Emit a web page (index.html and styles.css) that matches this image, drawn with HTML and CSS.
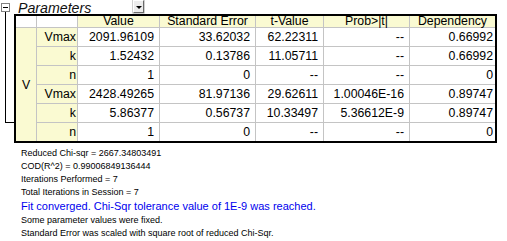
FILE: index.html
```html
<!DOCTYPE html>
<html>
<head>
<meta charset="utf-8">
<link rel="stylesheet" href="styles.css">
</head>
<body>
<div class="sheet">
  <div class="title-row">
    <span class="toggle"><span class="minus"></span></span>
    <span class="title">Parameters</span>
    <span class="drop"><span class="tri"></span></span>
  </div>
  <div class="main-row">
    <div class="connector"></div>
    <div class="grid">
      <div class="c corner"></div>
      <div class="c corner"></div>
      <div class="c hd">Value</div>
      <div class="c hd">Standard Error</div>
      <div class="c hd">t-Value</div>
      <div class="c hd">Prob&gt;|t|</div>
      <div class="c hd">Dependency</div>

      <div class="c group">V</div>

      <div class="c nm">Vmax</div><div class="c v">2091.96109</div><div class="c v">33.62032</div><div class="c v">62.22311</div><div class="c v">--</div><div class="c v last">0.66992</div>
      <div class="c nm">k</div><div class="c v">1.52432</div><div class="c v">0.13786</div><div class="c v">11.05711</div><div class="c v">--</div><div class="c v last">0.66992</div>
      <div class="c nm">n</div><div class="c v">1</div><div class="c v">0</div><div class="c v">--</div><div class="c v">--</div><div class="c v last">0</div>
      <div class="c nm">Vmax</div><div class="c v">2428.49265</div><div class="c v">81.97136</div><div class="c v">29.62611</div><div class="c v">1.00046E-16</div><div class="c v last">0.89747</div>
      <div class="c nm">k</div><div class="c v">5.86377</div><div class="c v">0.56737</div><div class="c v">10.33497</div><div class="c v">5.36612E-9</div><div class="c v last">0.89747</div>
      <div class="c nm">n</div><div class="c v">1</div><div class="c v">0</div><div class="c v">--</div><div class="c v">--</div><div class="c v last">0</div>
    </div>
  </div>
  <div class="notes">
    <div class="note">Reduced Chi-sqr = 2667.34803491</div>
    <div class="note">COD(R^2) = 0.99006849136444</div>
    <div class="note">Iterations Performed = 7</div>
    <div class="note">Total Iterations in Session = 7</div>
    <div class="note big">Fit converged. Chi-Sqr tolerance value of 1E-9 was reached.</div>
    <div class="note">Some parameter values were fixed.</div>
    <div class="note">Standard Error was scaled with square root of reduced Chi-Sqr.</div>
  </div>
</div>
</body>
</html>
```

FILE: styles.css
```css
html, body {
  margin: 0;
  padding: 0;
  background: #fff;
}
body {
  font-family: "Liberation Sans", Arial, sans-serif;
  color: #000;
}
.sheet {
  width: 507px;
}
.title-row {
  display: flex;
  align-items: flex-start;
  height: 14px;
}
.toggle {
  box-sizing: border-box;
  width: 9px;
  height: 9px;
  margin-left: 1px;
  margin-top: 3px;
  border: 1px solid #808080;
  background: #fff;
  display: flex;
  align-items: center;
  justify-content: center;
}
.minus {
  width: 5px;
  height: 1px;
  background: #000;
}
.title {
  width: 115px;
  margin-left: 8px;
  font-style: italic;
  font-size: 14.2px;
  line-height: 14px;
  padding-top: 1px;
  color: #111;
  white-space: nowrap;
}
.drop {
  box-sizing: border-box;
  width: 11px;
  height: 13px;
  background: #ececec;
  border: 1px solid;
  border-color: #fff #6a6a6a #6a6a6a #fff;
  box-shadow: 0 0 0 0.5px #a0a0a0;
  display: flex;
  align-items: center;
  justify-content: center;
}
.tri {
  width: 0;
  height: 0;
  border-left: 3px solid transparent;
  border-right: 3px solid transparent;
  border-top: 3px solid #000;
  margin-top: 1px;
}
.main-row {
  display: flex;
  align-items: flex-start;
}
.connector {
  box-sizing: content-box;
  margin-left: 5px;
  margin-top: -2px;
  width: 8px;
  height: 110px;
  border-left: 1px solid #000;
  border-bottom: 1px solid #000;
}
.grid {
  display: grid;
  grid-template-columns: 20px 40px 81px 95px 67px 85px 85px;
  grid-template-rows: 11px repeat(6, 18px);
  gap: 1px;
  background: #c4c4c4;
  border: 2px solid #000;
}
.c {
  font-size: 12.3px;
  line-height: 18px;
  white-space: nowrap;
  overflow: hidden;
  background: #fff;
}
.corner {
  background: #fff;
}
.hd {
  background: #fafad2;
  text-align: center;
  line-height: 11px;
  overflow: visible;
}
.group {
  grid-column: 1;
  grid-row: 2 / span 6;
  background: #fafad2;
  display: flex;
  align-items: center;
  justify-content: center;
}
.nm {
  grid-column: 2;
  background: #fafad2;
  text-align: right;
  padding-right: 1px;
}
.v {
  text-align: right;
  padding-right: 5px;
}
.v.last {
  padding-right: 2px;
}
.notes {
  margin-top: 4px;
  padding-left: 21px;
}
.note {
  font-size: 9px;
  line-height: 13px;
  white-space: nowrap;
}
.note.big {
  font-size: 11px;
  line-height: 15px;
  color: #0000ee;
}
```
